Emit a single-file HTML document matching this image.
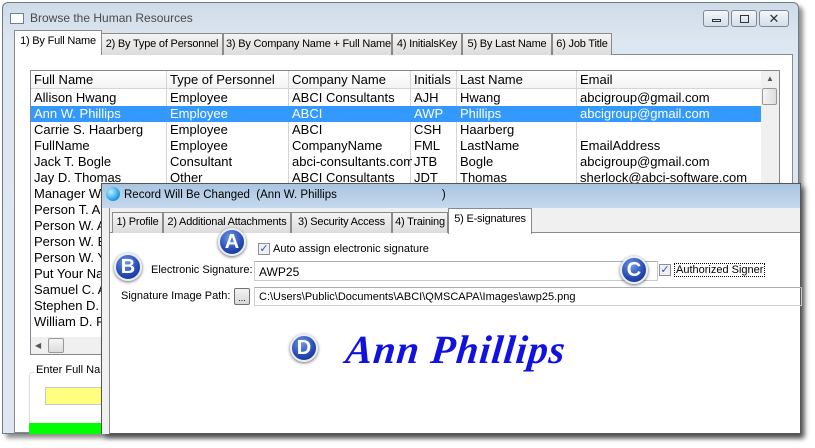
<!DOCTYPE html>
<html><head><meta charset="utf-8"><style>
*{margin:0;padding:0;box-sizing:border-box}
body{width:815px;height:448px;background:#fff;position:relative;overflow:hidden;font-family:"Liberation Sans",sans-serif;font-size:12.5px;color:#000}
.a{position:absolute}
.win{left:2px;top:2px;width:797px;height:432px;background:linear-gradient(#cfdbe8,#dde7f1 40px,#dfe8f2);border:1px solid #6d7a88;border-radius:6px 6px 0 0;box-shadow:4px 4px 5px rgba(0,0,0,.45)}
.tab{position:absolute;height:22px;background:linear-gradient(#f4f4f4,#dcdcdc);border:1px solid #8a8a8a;border-bottom:none;font-size:11px;padding:4px 2px 0;white-space:nowrap;overflow:hidden;text-align:center;letter-spacing:-0.2px}
.row{position:absolute;left:32px;width:728px;height:16px;font-size:13px}
.row span{position:absolute;top:0;white-space:nowrap;overflow:hidden}
.badge{position:absolute;width:28px;height:28px;border-radius:50%;background:radial-gradient(circle at 40% 30%,#6f95e6,#2447b0 60%,#142d80);border:2px solid #e8eef8;box-shadow:0 1px 3px rgba(0,0,0,.6);color:#fff;font-weight:bold;font-size:20px;text-align:center;line-height:24px}
.cb{position:absolute;width:12px;height:12px;border:1px solid #8e8f8f;background:#eef0f6;color:#3b55a8;font-size:11px;line-height:10px;text-align:center}
</style></head><body>
<div class="a win"></div>
<div class="a" style="left:10px;top:13px;width:14px;height:11px;border:1px solid #6a7f9c;background:#fff"></div>
<div class="a" style="left:30px;top:11px;font-size:12px;color:#4a4a4a">Browse the Human Resources</div>
<div class="a" style="left:703px;top:10px;width:26px;height:17px;border:1px solid #7c8896;border-radius:3px;background:linear-gradient(#f4f7fb,#d3dde9)"><div class="a" style="left:8px;top:8px;width:9px;height:3px;border:1px solid #333"></div></div>
<div class="a" style="left:731px;top:10px;width:26px;height:17px;border:1px solid #7c8896;border-radius:3px;background:linear-gradient(#f4f7fb,#d3dde9)"><div class="a" style="left:8px;top:4px;width:9px;height:8px;border:1px solid #333"></div></div>
<div class="a" style="left:759px;top:10px;width:30px;height:17px;border:1px solid #7c8896;border-radius:3px;background:linear-gradient(#f4f7fb,#d3dde9);text-align:center;font-size:13px;line-height:15px;color:#333">✕</div>
<div class="a" style="left:14px;top:54px;width:779px;height:379px;background:#fff;border:1px solid #8a8a8a"></div>
<div class="tab" style="left:14px;top:30px;width:88px;height:25px;background:#fff;z-index:2;border-bottom:none">1) By Full Name</div>
<div class="tab" style="left:101px;top:33px;width:122px">2) By Type of Personnel</div>
<div class="tab" style="left:223px;top:33px;width:169px">3) By Company Name + Full Name</div>
<div class="tab" style="left:392px;top:33px;width:70px">4) InitialsKey</div>
<div class="tab" style="left:462px;top:33px;width:90px">5) By Last Name</div>
<div class="tab" style="left:552px;top:33px;width:60px">6) Job Title</div>
<div class="a" style="left:30px;top:70px;width:750px;height:285px;border:1px solid #828790;background:#fff"></div>
<div class="a" style="left:31px;top:71px;width:730px;height:18px;background:linear-gradient(#fff,#f3f3f3);border-bottom:1px solid #d5d5d5"></div>
<div class="a" style="left:166px;top:71px;width:1px;height:266px;background:#d5d5d5"></div>
<div class="a" style="left:288px;top:71px;width:1px;height:266px;background:#d5d5d5"></div>
<div class="a" style="left:410px;top:71px;width:1px;height:266px;background:#d5d5d5"></div>
<div class="a" style="left:456px;top:71px;width:1px;height:266px;background:#d5d5d5"></div>
<div class="a" style="left:576px;top:71px;width:1px;height:266px;background:#d5d5d5"></div>
<div class="row" style="top:72px"><span style="left:2px">Full Name</span><span style="left:138px">Type of Personnel</span><span style="left:260px">Company Name</span><span style="left:382px">Initials</span><span style="left:428px">Last Name</span><span style="left:548px">Email</span></div>
<div class="a" style="left:31px;top:106px;width:730px;height:16px;background:#3399ff"></div>
<div class="row" style="top:90px"><span style="left:2px">Allison Hwang</span><span style="left:138px">Employee</span><span style="left:260px">ABCI Consultants</span><span style="left:382px">AJH</span><span style="left:428px">Hwang</span><span style="left:548px">abcigroup@gmail.com</span></div>
<div class="row" style="top:106px;color:#fff"><span style="left:2px">Ann W. Phillips</span><span style="left:138px">Employee</span><span style="left:260px">ABCI</span><span style="left:382px">AWP</span><span style="left:428px">Phillips</span><span style="left:548px">abcigroup@gmail.com</span></div>
<div class="row" style="top:122px"><span style="left:2px">Carrie S. Haarberg</span><span style="left:138px">Employee</span><span style="left:260px">ABCI</span><span style="left:382px">CSH</span><span style="left:428px">Haarberg</span></div>
<div class="row" style="top:138px"><span style="left:2px">FullName</span><span style="left:138px">Employee</span><span style="left:260px">CompanyName</span><span style="left:382px">FML</span><span style="left:428px">LastName</span><span style="left:548px">EmailAddress</span></div>
<div class="row" style="top:154px"><span style="left:2px">Jack T. Bogle</span><span style="left:138px">Consultant</span><span style="left:260px;width:120px">abci-consultants.com</span><span style="left:382px">JTB</span><span style="left:428px">Bogle</span><span style="left:548px">abcigroup@gmail.com</span></div>
<div class="row" style="top:170px"><span style="left:2px">Jay D. Thomas</span><span style="left:138px">Other</span><span style="left:260px">ABCI Consultants</span><span style="left:382px">JDT</span><span style="left:428px">Thomas</span><span style="left:548px">sherlock@abci-software.com</span></div>
<div class="row" style="top:186px"><span style="left:2px">Manager W.</span></div>
<div class="row" style="top:202px"><span style="left:2px">Person T. A</span></div>
<div class="row" style="top:218px"><span style="left:2px">Person W. A</span></div>
<div class="row" style="top:234px"><span style="left:2px">Person W. B</span></div>
<div class="row" style="top:250px"><span style="left:2px">Person W. Y</span></div>
<div class="row" style="top:266px"><span style="left:2px">Put Your Na</span></div>
<div class="row" style="top:282px"><span style="left:2px">Samuel C. A</span></div>
<div class="row" style="top:298px"><span style="left:2px">Stephen D.</span></div>
<div class="row" style="top:314px"><span style="left:2px">William D. F</span></div>
<div class="a" style="left:761px;top:71px;width:18px;height:266px;background:#f0f0f0"></div>
<div class="a" style="left:766px;top:74px;font-size:8px;color:#555">▲</div>
<div class="a" style="left:762px;top:88px;width:15px;height:17px;border:1px solid #999;border-radius:2px;background:linear-gradient(90deg,#f5f5f5,#dcdcdc)"></div>
<div class="a" style="left:31px;top:337px;width:730px;height:17px;background:#f0f0f0"></div>
<div class="a" style="left:35px;top:341px;font-size:8px;color:#555">◀</div>
<div class="a" style="left:48px;top:338px;width:16px;height:15px;border:1px solid #999;border-radius:2px;background:linear-gradient(#f5f5f5,#dcdcdc)"></div>
<div class="a" style="left:29px;top:372px;width:80px;height:55px;border:1px solid #d5dfe5;border-radius:3px"></div>
<div class="a" style="left:34px;top:364px;background:#fff;padding:0 2px;font-size:11px">Enter Full Nam</div>
<div class="a" style="left:45px;top:387px;width:65px;height:18px;background:#ffff80;border:1px solid #c8c8c8"></div>
<div class="a" style="left:29px;top:423px;width:80px;height:11px;background:#00ff00"></div>
<div class="a" style="left:101px;top:183px;width:700px;height:251px;background:#fff;border:1px solid #555;box-shadow:4px 4px 5px rgba(0,0,0,.45)"></div>
<div class="a" style="left:102px;top:184px;width:698px;height:24px;background:linear-gradient(#aac4e0,#c5d9ee)"></div>
<div class="a" style="left:106px;top:187px;width:14px;height:14px;border-radius:50%;background:radial-gradient(circle at 35% 35%,#bfefff,#2aa6e8 60%,#1466b0)"></div>
<div class="a" style="left:124px;top:189px;font-size:11.5px">Record Will Be Changed&nbsp; (Ann W. Phillips<span style="margin-left:105px">)</span></div>
<div class="a" style="left:102px;top:208px;width:698px;height:25px;background:#f0f0f0;border-bottom:1px solid #8a8a8a"></div>
<div class="a" style="left:102px;top:208px;width:8px;height:226px;background:#f0f0f0;border-right:1px solid #8a8a8a"></div>
<div class="tab" style="left:112px;top:212px;height:21px;width:51px;padding-top:3px">1) Profile</div>
<div class="tab" style="left:163px;top:212px;height:21px;width:128px;padding-top:3px">2) Additional Attachments</div>
<div class="tab" style="left:291px;top:212px;height:21px;width:101px;padding-top:3px">3) Security Access</div>
<div class="tab" style="left:392px;top:212px;height:21px;width:56px;padding-top:3px">4) Training</div>
<div class="tab" style="left:448px;top:208px;height:26px;width:84px;background:#fff;z-index:2;padding-top:4px">5) E-signatures</div>
<div class="cb" style="left:258px;top:243px">✓</div>
<div class="a" style="left:273px;top:243px;font-size:11px">Auto assign electronic signature</div>
<div class="a" style="left:151px;top:264px;font-size:11px">Electronic Signature:</div>
<div class="a" style="left:254px;top:261px;width:404px;height:20px;border:1px solid #ccc;border-top-color:#abadb3;padding:3px 4px;font-size:12px">AWP25</div>
<div class="cb" style="left:659px;top:264px">✓</div>
<div class="a" style="left:674px;top:263px;font-size:11px;border:1px dotted #000;padding:0 1px">Authorized Signer</div>
<div class="a" style="left:121px;top:290px;font-size:11px">Signature Image Path:</div>
<div class="a" style="left:234px;top:288px;width:16px;height:17px;border:1px solid #707070;border-radius:2px;background:linear-gradient(#f2f2f2,#d8d8d8);font-size:9px;text-align:center;line-height:18px">...</div>
<div class="a" style="left:254px;top:287px;width:548px;height:19px;border:1px solid #ccc;border-top-color:#abadb3;padding:3px 4px;font-size:11px">C:\Users\Public\Documents\ABCI\QMSCAPA\Images\awp25.png</div>
<div class="a" style="left:346px;top:326px;font-family:'Liberation Serif',serif;font-style:italic;font-weight:bold;font-size:40px;color:#1212e0;letter-spacing:1px;transform:skewX(-6deg)">Ann Phillips</div>
<div class="badge" style="left:218px;top:228px">A</div>
<div class="badge" style="left:114px;top:253px">B</div>
<div class="badge" style="left:620px;top:256px">C</div>
<div class="badge" style="left:290px;top:334px">D</div>
</body></html>
